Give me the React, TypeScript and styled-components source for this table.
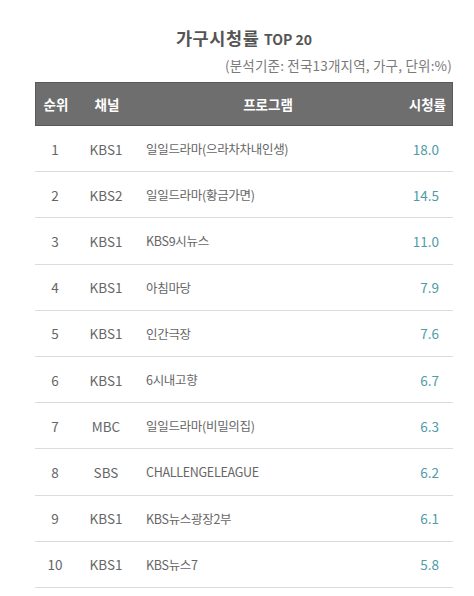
import React from "react";
import styled, { createGlobalStyle } from "styled-components";

type Row = {
  rank: number;
  channel: string;
  program: string;
  rating: string;
};

const rows: Row[] = [
  { rank: 1, channel: "KBS1", program: "일일드라마(으라차차내인생)", rating: "18.0" },
  { rank: 2, channel: "KBS2", program: "일일드라마(황금가면)", rating: "14.5" },
  { rank: 3, channel: "KBS1", program: "KBS9시뉴스", rating: "11.0" },
  { rank: 4, channel: "KBS1", program: "아침마당", rating: "7.9" },
  { rank: 5, channel: "KBS1", program: "인간극장", rating: "7.6" },
  { rank: 6, channel: "KBS1", program: "6시내고향", rating: "6.7" },
  { rank: 7, channel: "MBC", program: "일일드라마(비밀의집)", rating: "6.3" },
  { rank: 8, channel: "SBS", program: "CHALLENGELEAGUE", rating: "6.2" },
  { rank: 9, channel: "KBS1", program: "KBS뉴스광장2부", rating: "6.1" },
  { rank: 10, channel: "KBS1", program: "KBS뉴스7", rating: "5.8" },
];

const GlobalStyle = createGlobalStyle`
  body {
    margin: 0;
    background: #fff;
    font-family: "Noto Sans CJK KR", "Noto Sans", sans-serif;
  }
`;

const Page = styled.div`
  width: 474px;
  padding: 24px 21px 0 35px;
  box-sizing: border-box;
`;

const Title = styled.h2`
  margin: 0 0 0 -35px;
  width: 488px;
  text-align: center;
  font-size: 17.5px;
  font-weight: 700;
  color: #555;
  line-height: 27px;
  letter-spacing: 0.6px;
  span {
    font-size: 14px;
    letter-spacing: 0;
  }
`;

const Note = styled.div`
  text-align: right;
  font-size: 13.5px;
  color: #7a7a7a;
  line-height: 18px;
  margin-top: 3px;
  margin-right: 1px;
  letter-spacing: 0.2px;
`;

const Table = styled.div`
  margin-top: 8px;
`;

const Grid = styled.div`
  display: grid;
  grid-template-columns: 40px 62px 1fr 80px;
  align-items: center;
`;

const HeadRow = styled(Grid)`
  height: 44px;
  background: #6e6e6e;
  border: 1px solid #5a5a5a;
  box-sizing: border-box;
  color: #fff;
  font-weight: 700;
  font-size: 13.5px;
`;

const HeadCell = styled.div<{ $align: "center" | "right"; $pad?: string }>`
  text-align: ${(p) => p.$align};
  padding: ${(p) => p.$pad ?? "0"};
`;

const BodyRow = styled(Grid)`
  height: 46.2px;
  border-bottom: 1px solid #dcdcdc;
  box-sizing: border-box;
  font-size: 13.5px;
  color: #666;
`;

const Cell = styled.div<{ $align?: "left" | "center" | "right" }>`
  text-align: ${(p) => p.$align ?? "left"};
`;

const Program = styled(Cell)`
  padding-left: 9px;
  font-size: 12.5px;
  letter-spacing: -0.3px;
`;

const Rating = styled(Cell)`
  padding-right: 14px;
  color: #4f9ba6;
`;

export default function App() {
  return (
    <Page>
      <GlobalStyle />
      <Title>
        가구시청률 <span>TOP 20</span>
      </Title>
      <Note>(분석기준: 전국13개지역, 가구, 단위:%)</Note>
      <Table>
        <HeadRow>
          <HeadCell $align="center">순위</HeadCell>
          <HeadCell $align="center">채널</HeadCell>
          <HeadCell $align="center" $pad="0 0 0 26px">
            프로그램
          </HeadCell>
          <HeadCell $align="right" $pad="0 6px 0 0">
            시청률
          </HeadCell>
        </HeadRow>
        {rows.map((r) => (
          <BodyRow key={r.rank}>
            <Cell $align="center">{r.rank}</Cell>
            <Cell $align="center">{r.channel}</Cell>
            <Program>{r.program}</Program>
            <Rating $align="right">{r.rating}</Rating>
          </BodyRow>
        ))}
      </Table>
    </Page>
  );
}
